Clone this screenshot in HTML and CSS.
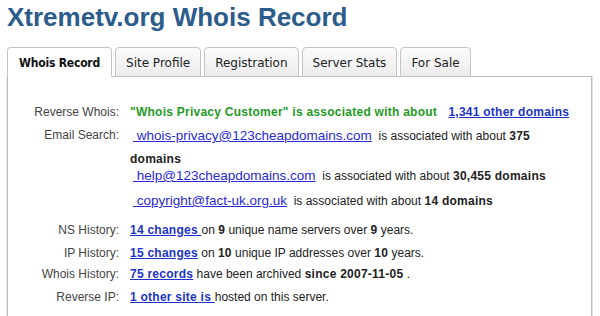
FILE: index.html
```html
<!DOCTYPE html>
<html lang="en">
<head>
    <meta charset="UTF-8">
    <meta name="viewport" content="width=device-width, initial-scale=1.0">
    <title>Xtremetv.org Whois Record</title>
    <link rel="stylesheet" href="styles.css">
</head>
<body>
    <div class="page">
        <h1 class="title">Xtremetv.org Whois Record</h1>
        <ul class="tabs">
            <li class="tab active">Whois Record</li>
            <li class="tab">Site Profile</li>
            <li class="tab">Registration</li>
            <li class="tab">Server Stats</li>
            <li class="tab">For Sale</li>
        </ul>
        <div class="panel">
            <div class="row">
                <div class="label">Reverse Whois:</div>
                <div class="value nowrap"><span class="green">"Whois Privacy Customer" is associated with about</span> <a class="link gap" href="#">1,341 other domains</a></div>
            </div>
            <div class="row">
                <div class="label tall">Email Search:</div>
                <div class="value">
                    <div class="email first"><a class="mail" href="#">&nbsp;whois-privacy@123cheapdomains.com</a>&nbsp; is associated with about <b>375</b><br><b>domains</b></div>
                    <div class="email second"><a class="mail" href="#">&nbsp;help@123cheapdomains.com</a>&nbsp; is associated with about <b>30,455 domains</b></div>
                    <div class="email third"><a class="mail" href="#">&nbsp;copyright@fact-uk.org.uk</a>&nbsp; is associated with about <b>14 domains</b></div>
                </div>
            </div>
            <div class="row spaced">
                <div class="label">NS History:</div>
                <div class="value"><a class="link" href="#">14 changes </a>on <b>9</b> unique name servers over <b>9</b> years.</div>
            </div>
            <div class="row">
                <div class="label">IP History:</div>
                <div class="value"><a class="link" href="#">15 changes</a> on <b>10</b> unique IP addresses over <b>10</b> years.</div>
            </div>
            <div class="row tight">
                <div class="label">Whois History:</div>
                <div class="value"><a class="link" href="#">75 records</a> have been archived <b>since 2007-11-05</b> .</div>
            </div>
            <div class="row">
                <div class="label">Reverse IP:</div>
                <div class="value"><a class="link" href="#">1 other site is </a>hosted on this server.</div>
            </div>
        </div>
    </div>
</body>
</html>
```

FILE: styles.css
```css
body { margin: 0; background-color: #fff; font-family: "Liberation Sans", Arial, sans-serif; color: #222; }
.page { padding: 0 8px 0 7px; }
.title { margin: 2px 0 0; font-size: 26px; line-height: 30px; font-weight: bold; color: #2c5c8c; }
.tabs { display: flex; gap: 3px; list-style: none; margin: 15px 0 -1px; padding: 0; position: relative; }
.tab { padding: 7px 10px 0; box-sizing: border-box; height: 30px; border: 1px solid #c4c4c4; border-radius: 4px 4px 0 0; background: linear-gradient(#fbfbfb, #ececec); font-family: "DejaVu Sans", Verdana, sans-serif; font-size: 12px; line-height: 16px; color: #222; }
.tab.active { padding: 7px 11px 0; background: #fff; border-bottom-color: #fff; font-family: "DejaVu Sans Condensed", "DejaVu Sans", sans-serif; font-weight: bold; letter-spacing: -0.2px; color: #111; }
.panel { border: 1px solid #bdbdbd; box-shadow: 1px 0 0 #e2e2e2, -1px 0 0 #e8e8e8; padding: 23px 0 0; min-height: 300px; font-size: 12px; }
.row { display: flex; align-items: flex-start; line-height: 22px; margin-top: 1px; }
.row.spaced { margin-top: 8px; }
.row.tight { margin-top: -1px; }
.label { width: 111px; flex-shrink: 0; margin-right: 11px; text-align: right; color: #444; }
.label.tall { line-height: 23px; }
.value { color: #222; }
.value b { letter-spacing: 0.25px; }
.nowrap { white-space: nowrap; }
.green { color: #1f9a1f; font-weight: bold; letter-spacing: 0.25px; }
.link { color: #1c34c8; font-weight: bold; letter-spacing: 0.25px; text-decoration: underline; }
.gap { margin-left: 8px; }
.email { max-width: 420px; }
.email.first { line-height: 23px; }
.email.second { line-height: 20px; margin-top: -5px; }
.email.third { line-height: 20px; margin-top: 5px; }
.mail { margin-left: 3px; font-size: 13.5px; color: #2a2ad6; text-decoration: underline; }
```
